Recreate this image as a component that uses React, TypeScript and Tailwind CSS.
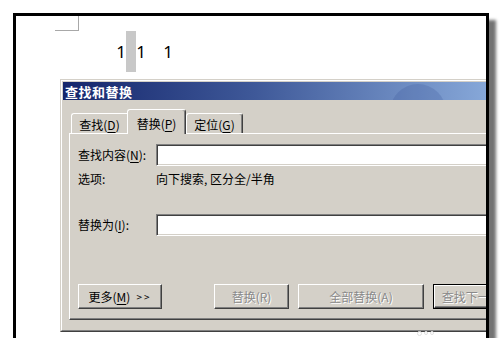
import React from "react";

const U = ({ c }: { c: string }) => (
  <span className="underline underline-offset-[2px] decoration-1">{c}</span>
);

const Input = () => (
  <div className="w-[360px] h-[22px] bg-white border border-t-[#808080] border-l-[#808080] border-b-white border-r-white shadow-[inset_1px_1px_0_#404040,inset_-1px_-1px_0_#d4d0c8]" />
);

type BtnProps = { w: string; children: React.ReactNode; disabled?: boolean; def?: boolean };

const Btn = ({ w, children, disabled, def }: BtnProps) => {
  const inner = (
    <div
      className={
        "h-full w-full flex items-center justify-center whitespace-nowrap border border-t-white border-l-white border-r-[#404040] border-b-[#404040] shadow-[inset_-1px_-1px_0_#808080] leading-[16px] " +
        (disabled ? "text-[#8a8a8a] [text-shadow:1px_1px_0_#ffffff]" : "text-black")
      }
    >
      {children}
    </div>
  );
  return (
    <div className={w + " h-[25px] shrink-0 " + (def ? "border border-black" : "")}>{inner}</div>
  );
};

export default function App() {
  return (
    <div className="relative w-[502px] h-[338px] bg-white overflow-hidden font-['Noto_Sans_CJK_SC',sans-serif] text-[12px] text-black">
      <div className="ml-[13px] mt-[13px] w-[476px] h-[340px] border-[3px] border-b-0 border-black bg-white overflow-hidden shadow-[7px_7px_3px_rgba(0,0,0,0.55)]">
        {/* page corner mark */}
        <div className="ml-[39px] w-[24px] h-[15px] border-r border-b border-[#a8a8a8]" />
        {/* document text */}
        <div className="flex h-[41px] items-center pl-[100px] font-['Noto_Sans',sans-serif] text-[17px] leading-none">
          <span className="w-[10px] text-center">1</span>
          <span className="w-[10px] self-stretch bg-[#c8c8c8]" />
          <span className="w-[10px] text-center">1</span>
          <span className="w-[17px]" />
          <span className="w-[10px] text-center">1</span>
        </div>
        {/* dialog */}
        <div className="ml-[44px] mt-[7px] w-[480px] h-[253px] border border-t-[#d4d0c8] border-l-[#d4d0c8] border-r-[#404040] border-b-[#404040] bg-[#d4d0c8]">
          <div className="h-full border border-t-white border-l-white border-r-[#808080] border-b-[#808080] p-[1px] flex flex-col">
            <div className="relative h-[18px] shrink-0 overflow-hidden bg-[linear-gradient(90deg,#15266c_0%,#3e5898_40%,#86a7d8_89%,#92b2e0_100%)] flex items-center pl-[2px]">
              <div className="absolute left-[327px] top-[2px] w-[56px] h-[56px] rounded-full bg-[rgba(30,55,130,0.16)]" />
              <span className="relative text-white font-bold text-[13px] leading-none tracking-[0.5px]">查找和替换</span>
            </div>
            <div className="flex-1 pt-[9px] pl-[6px] flex flex-col">
              {/* tabs */}
              <div className="relative z-10 flex items-end h-[24px] ml-[2px]">
                <div className="w-[56px] h-[20px] pt-[2px] border-t border-l border-t-white border-l-white rounded-tl-[3px] flex items-center justify-center leading-[16px]">
                  查找(<U c="D" />)
                </div>
                <div className="w-[59px] h-[25px] -mb-[1px] pt-[3px] border-t border-l border-r border-t-white border-l-white border-r-[#404040] rounded-t-[3px] bg-[#d4d0c8] shadow-[inset_-1px_0_0_#808080] flex items-center justify-center leading-[16px]">
                  替换(<U c="P" />)
                </div>
                <div className="w-[57px] h-[20px] pt-[2px] border-t border-l border-r border-t-white border-l-white border-r-[#404040] rounded-t-[3px] shadow-[inset_-1px_0_0_#808080] flex items-center justify-center leading-[16px]">
                  定位(<U c="G" />)
                </div>
              </div>
              {/* panel */}
              <div className="w-[462px] h-[187px] shrink-0 border border-t-white border-l-white border-r-[#404040] border-b-[#404040] shadow-[inset_-1px_-1px_0_#808080] pl-[8px] pt-[10px] flex flex-col">
                <div className="flex items-center h-[22px]">
                  <span className="w-[78px] shrink-0 leading-[16px]">
                    查找内容(<U c="N" />):
                  </span>
                  <Input />
                </div>
                <div className="flex mt-[5px] h-[16px] leading-[16px]">
                  <span className="w-[78px] shrink-0">选项:</span>
                  <span className="whitespace-pre">向下搜索, 区分全/半角</span>
                </div>
                <div className="flex items-center h-[22px] mt-[27px]">
                  <span className="w-[78px] shrink-0 leading-[16px]">
                    替换为(<U c="I" />):
                  </span>
                  <Input />
                </div>
                <div className="flex mt-[48px] h-[25px]">
                  <Btn w="w-[84px]">
                    <span>
                      更多(<U c="M" />)
                    </span>
                    <span className="ml-[6px] text-[10px] tracking-[2px]">&gt;&gt;</span>
                  </Btn>
                  <div className="w-[52px] shrink-0" />
                  <Btn w="w-[75px]" disabled>
                    替换(R)
                  </Btn>
                  <div className="w-[9px] shrink-0" />
                  <Btn w="w-[126px]" disabled>
                    全部替换(A)
                  </Btn>
                  <div className="w-[9px] shrink-0" />
                  <Btn w="w-[92px]" disabled def>
                    查找下一处(F)
                  </Btn>
                </div>
              </div>
            </div>
          </div>
        </div>
      </div>
      {/* faint watermark */}
      <div className="absolute left-[417px] top-[331px] flex gap-[2px]">
        <span className="w-[5px] h-[5px] rounded-full border border-[#e2e2e2]" />
        <span className="w-[4px] h-[4px] rounded-full border border-[#e2e2e2]" />
        <span className="w-[4px] h-[4px] rounded-full border border-[#e2e2e2]" />
      </div>
    </div>
  );
}
